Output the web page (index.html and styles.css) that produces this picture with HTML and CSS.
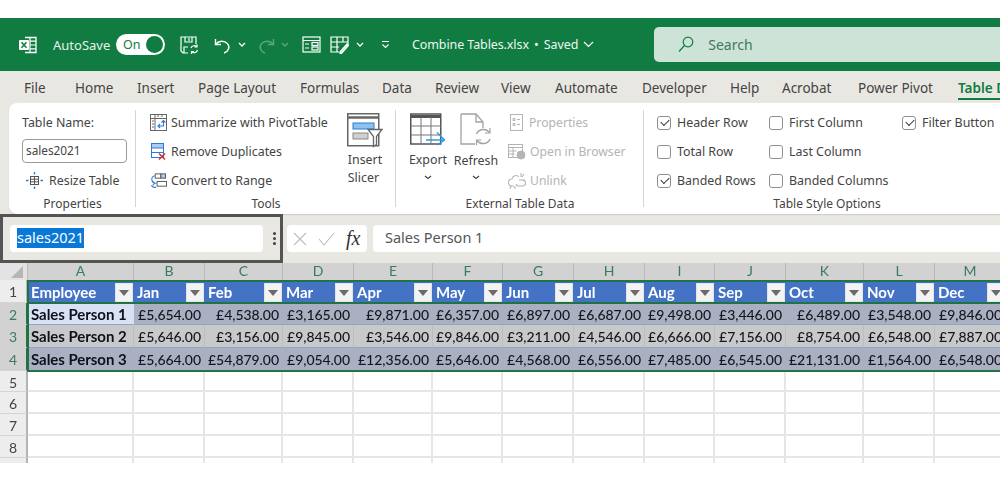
FILE: index.html
```html
<!DOCTYPE html>
<html lang="en">
<head>
<meta charset="utf-8">
<title>Combine Tables.xlsx</title>
<link rel="stylesheet" href="styles.css">
</head>
<body>
<div class="app">
  <header class="titlebar">
    <svg class="qi logo" width="20" height="20" viewBox="0 0 20 20"><path d="M7 2.500h11v15H7" fill="none" stroke="#fff" stroke-width="1.300"/><path d="M12 2.500v15M12 6.200h6M12 10h6M12 13.800h6" stroke="#fff" stroke-width="1.200"/><rect x="1" y="5" width="10" height="10" rx="1" fill="#fff"/><path d="M3.500 7.300l5 5.400M8.500 7.300l-5 5.400" stroke="#107c41" stroke-width="1.500"/></svg>
    <span class="autosave">AutoSave</span>
    <span class="toggle"><span class="toggle-label">On</span><span class="knob"></span></span>
    <svg class="qi save" width="20" height="20" viewBox="0 0 20 20" fill="none" stroke="#fff" stroke-width="1.200"><path d="M9 18H4l-2-2V2h15v7"/><path d="M6 2v5h7V2M10 3v3M5 18v-6h4"/><path d="M12 13a3.500 3.500 0 0 1 6-1M18.500 15a3.500 3.500 0 0 1-6 1.500M18 9.500V12h-2.500M12.500 19v-2.500H15"/></svg>
    <svg class="qi undo" width="18" height="18" viewBox="0 0 18 18" fill="none" stroke="#fff" stroke-width="1.400"><path d="M1.500 3v5.500H7"/><path d="M2 8a7 6 0 1 1 8 9"/></svg>
    <svg class="qi chev-u" width="8" height="6" viewBox="0 0 8 6" fill="none" stroke="#fff" stroke-width="1.300"><path d="M1 1l3 3 3-3"/></svg>
    <svg class="qi redo" width="18" height="18" viewBox="0 0 18 18" fill="none" stroke="#5fa57f" stroke-width="1.400"><path d="M16.500 3v5.500H11"/><path d="M16 8a7 6 0 1 0-8 9"/></svg>
    <svg class="qi chev-r" width="8" height="6" viewBox="0 0 8 6" fill="none" stroke="#5fa57f" stroke-width="1.300"><path d="M1 1l3 3 3-3"/></svg>
    <svg class="qi form" width="19" height="17" viewBox="0 0 19 17" fill="none" stroke="#fff" stroke-width="1.200"><rect x="1" y="1" width="17" height="15"/><path d="M1 4.500h17M3 8h4M3 12h4"/><rect x="10" y="6.500" width="6" height="3"/><rect x="10" y="11" width="6" height="3"/></svg>
    <svg class="qi tbl" width="19" height="18" viewBox="0 0 19 18" fill="none" stroke="#fff" stroke-width="1.200"><path d="M18 9V1H1v15h8M1 6h17M1 11h8M7 1v15M13 1v5"/><path d="M10 16l7-8 1.500 1.500-7 8H10z" fill="#cfe3d8"/></svg>
    <svg class="qi chev-t" width="8" height="6" viewBox="0 0 8 6" fill="none" stroke="#fff" stroke-width="1.300"><path d="M1 1l3 3 3-3"/></svg>
    <svg class="qi qat" width="9" height="9" viewBox="0 0 9 9" fill="none" stroke="#fff" stroke-width="1.100"><path d="M1 1.500h7M1.500 4.500l3 3 3-3"/></svg>
    <span class="doc">Combine Tables.xlsx <b class="dot">•</b> Saved</span>
    <svg class="qi chev-d" width="11" height="7" viewBox="0 0 11 7" fill="none" stroke="#fff" stroke-width="1.200"><path d="M1 1l4.500 4.500L10 1"/></svg>
    <div class="search">
      <svg width="16" height="17" viewBox="0 0 16 17" fill="none" stroke="#107c41" stroke-width="1.200"><circle cx="10" cy="6" r="4.800"/><path d="M6.500 9.500L1 15.500"/></svg>
      <span>Search</span>
    </div>
  </header>

  <div class="chrome">
  <nav class="tabs">
    <span class="tab">File</span><span class="tab">Home</span><span class="tab">Insert</span><span class="tab">Page Layout</span><span class="tab">Formulas</span><span class="tab">Data</span><span class="tab">Review</span><span class="tab">View</span><span class="tab">Automate</span><span class="tab">Developer</span><span class="tab">Help</span><span class="tab">Acrobat</span><span class="tab">Power Pivot</span><span class="tab active">Table Design</span>
  </nav>

  <section class="ribbon">
    <div class="group g-props">
      <div class="body col">
        <span class="line">Table Name:</span>
        <span class="namefield">sales2021</span>
        <span class="line item resize">
          <svg width="17" height="17" viewBox="0 0 17 17" fill="none" stroke="#555" stroke-width="1"><rect x="4.500" y="4.500" width="8" height="8"/><path d="M4.500 7.200h8M4.500 9.800h8M8.500 4.500v8"/><path d="M8.500 0v2.500M8.500 14.500V17M0 8.500h2.500M14.500 8.500H17" stroke="#2b7cd3" stroke-width="1.400"/></svg>
          Resize Table
        </span>
      </div>
      <div class="label">Properties</div>
    </div>
    <div class="group g-tools">
      <div class="body row">
        <div class="col t-list">
          <span class="line item"><svg width="17" height="17" viewBox="0 0 17 17" fill="none"><rect x=".500" y=".500" width="16" height="16" fill="#fff" stroke="#666"/><path d="M.5 4.500h16M5 .5v16" stroke="#666"/><path d="M2 7h2M2 10h2M2 13h2M7 2h2M11 2h2" stroke="#666"/><path d="M13.500 6.500v5.500H8M10 10l-2 2 2 2M11.500 8.500l2-2 2 2" stroke="#2b7cd3" stroke-width="1.100"/></svg>Summarize with PivotTable</span>
          <span class="line item"><svg width="17" height="17" viewBox="0 0 17 17" fill="none"><rect x="1.500" y=".500" width="12" height="14" fill="#fff" stroke="#2b7cd3"/><rect x="1.500" y=".500" width="12" height="4.500" fill="#a9cdf0" stroke="#2b7cd3"/><path d="M1.500 9.500h12" stroke="#2b7cd3"/><path d="M9 10.500l6 6M15 10.500l-6 6" stroke="#d13438" stroke-width="1.500"/></svg>Remove Duplicates</span>
          <span class="line item"><svg width="17" height="17" viewBox="0 0 18 17" fill="none"><rect x="5.500" y="1.500" width="6" height="4.500" fill="#fff" stroke="#555"/><rect x="11.500" y="1.500" width="5" height="4.500" fill="#a9cdf0" stroke="#555"/><rect x="7.500" y="9.500" width="10" height="5" fill="#fff" stroke="#555"/><path d="M5 3.500A4 4 0 0 0 2 8a4 4 0 0 0 3 3.500h2M3 9.500l2 2-2 2M1.500 13.500c1 2 3 2.500 5 2.500" stroke="#2b7cd3" stroke-width="1.100"/></svg>Convert to Range</span>
        </div>
        <div class="big slicer">
          <svg width="36" height="35" viewBox="0 0 36 35" fill="none"><rect x=".75" y=".75" width="31" height="32" fill="#fff" stroke="#666" stroke-width="1.500"/><path d="M.75 4.500h31" stroke="#666" stroke-width="2.500"/><rect x="6" y="10" width="21" height="6" fill="#8fc0ee" stroke="#2b7cd3"/><rect x="6" y="20" width="15" height="6" fill="#d0d0d0" stroke="#888"/><path d="M21 16.500h14l-5.500 7v8l-3 2v-10z" fill="#fff" stroke="#666" stroke-width="1.300"/></svg>
          <span>Insert<br>Slicer</span>
        </div>
      </div>
      <div class="label">Tools</div>
    </div>
    <div class="group g-ext">
      <div class="body row">
        <div class="big export">
          <svg width="36" height="33" viewBox="0 0 36 33" fill="none"><rect x=".75" y="1" width="30" height="30" fill="#fff" stroke="#555" stroke-width="1.500"/><path d="M.75 3.500h30" stroke="#555" stroke-width="3"/><path d="M11 4v27M21 4v27M1 13h30M1 22h30" stroke="#777"/><path d="M16 27h18M27 19.500l7.500 7.500-7.500 5" stroke="#2f9be6" stroke-width="1.500"/></svg>
          <span>Export</span>
          <svg class="mini" width="8" height="5" viewBox="0 0 8 5" fill="none" stroke="#444" stroke-width="1.200"><path d="M1 1l3 2.500L7 1"/></svg>
        </div>
        <div class="big refresh">
          <svg width="32" height="33" viewBox="0 0 32 33" fill="none"><path d="M1 1h15l7 8v6M1 1v30h14" fill="#fff" stroke="#a3a3a3" stroke-width="1.300"/><path d="M16 1v8h7" stroke="#a3a3a3" stroke-width="1.300"/><path d="M16.500 21a7.500 7.500 0 0 1 13-1.500M30 26a7.500 7.500 0 0 1-13 1.500" stroke="#a3a3a3" stroke-width="1.500"/><path d="M30 15v5h-5M16.500 32v-5h5" stroke="#a3a3a3" stroke-width="1.200"/></svg>
          <span>Refresh</span>
          <svg class="mini" width="8" height="5" viewBox="0 0 8 5" fill="none" stroke="#444" stroke-width="1.200"><path d="M1 1l3 2.500L7 1"/></svg>
        </div>
        <div class="col disabled">
          <span class="line item"><svg width="17" height="17" viewBox="0 0 17 17" fill="none" stroke="#b4b4b4"><rect x="2.500" y=".500" width="12" height="16"/><path d="M5 4.500h2v2H5zM5 9.500h2v2H5zM9 5.500h3M9 10.500h3"/></svg>Properties</span>
          <span class="line item"><svg width="18" height="17" viewBox="0 0 18 17" fill="none" stroke="#b4b4b4"><rect x=".500" y="1.500" width="14" height="13"/><path d="M.5 4.500h14M5 4.500v10M.5 8h8M.5 11h6"/><circle cx="13" cy="12" r="4" fill="#b4b4b4"/></svg>Open in Browser</span>
          <span class="line item"><svg width="18" height="17" viewBox="0 0 18 17" fill="none" stroke="#b4b4b4" stroke-width="1.100"><path d="M6 14H4a3 3 0 0 1 0-7 4 4 0 0 1 7-2M11 8h3a3 3 0 0 1 1 6h-5a3 3 0 0 1-2-2M13 1v4M16 2l-2 3M3 14l-1 3M7 14v3"/></svg>Unlink</span>
        </div>
      </div>
      <div class="label">External Table Data</div>
    </div>
    <div class="group g-opts">
      <div class="body row">
        <div class="col c-one">
          <span class="line item"><span class="box on"></span>Header Row</span>
          <span class="line item"><span class="box"></span>Total Row</span>
          <span class="line item"><span class="box on"></span>Banded Rows</span>
        </div>
        <div class="col c-two">
          <span class="line item"><span class="box"></span>First Column</span>
          <span class="line item"><span class="box"></span>Last Column</span>
          <span class="line item"><span class="box"></span>Banded Columns</span>
        </div>
        <div class="col c-three">
          <span class="line item"><span class="box on"></span>Filter Button</span>
        </div>
      </div>
      <div class="label">Table Style Options</div>
    </div>
  </section>

  <section class="formula">
    <div class="namebox">
      <div class="nameinput"><span class="selected">sales2021</span></div>
      <span class="dots"></span>
    </div>
    <div class="fxbox">
      <svg width="14" height="14" viewBox="0 0 14 14" fill="none" stroke="#bdbdbd" stroke-width="1.100"><path d="M1 1l12 12M13 1L1 13"/></svg>
      <svg width="17" height="14" viewBox="0 0 17 14" fill="none" stroke="#bdbdbd" stroke-width="1.100"><path d="M1 7l5 6L16 1"/></svg>
      <span class="fx">fx</span>
    </div>
    <div class="finput">Sales Person 1</div>
  </section>
  </div>

  <section class="sheetwrap">
    <div class="sheet">
      <div class="corner"><span class="tri"></span></div>
      <div class="ch">A</div><div class="ch">B</div><div class="ch">C</div><div class="ch">D</div><div class="ch">E</div><div class="ch">F</div><div class="ch">G</div><div class="ch">H</div><div class="ch">I</div><div class="ch">J</div><div class="ch">K</div><div class="ch">L</div><div class="ch">M</div>

      <div class="rh">1</div>
      <div class="th">Employee<span class="fb"></span></div><div class="th">Jan<span class="fb"></span></div><div class="th">Feb<span class="fb"></span></div><div class="th">Mar<span class="fb"></span></div><div class="th">Apr<span class="fb"></span></div><div class="th">May<span class="fb"></span></div><div class="th">Jun<span class="fb"></span></div><div class="th">Jul<span class="fb"></span></div><div class="th">Aug<span class="fb"></span></div><div class="th">Sep<span class="fb"></span></div><div class="th">Oct<span class="fb"></span></div><div class="th">Nov<span class="fb"></span></div><div class="th">Dec<span class="fb"></span></div>

      <div class="rh sel">2</div>
      <div class="td name cur">Sales Person 1</div><div class="td d">£5,654.00</div><div class="td d">£4,538.00</div><div class="td d">£3,165.00</div><div class="td d">£9,871.00</div><div class="td d">£6,357.00</div><div class="td d">£6,897.00</div><div class="td d">£6,687.00</div><div class="td d">£9,498.00</div><div class="td d">£3,446.00</div><div class="td d">£6,489.00</div><div class="td d">£3,548.00</div><div class="td d">£9,846.00</div>

      <div class="rh sel">3</div>
      <div class="td name l">Sales Person 2</div><div class="td l">£5,646.00</div><div class="td l">£3,156.00</div><div class="td l">£9,845.00</div><div class="td l">£3,546.00</div><div class="td l">£9,846.00</div><div class="td l">£3,211.00</div><div class="td l">£4,546.00</div><div class="td l">£6,666.00</div><div class="td l">£7,156.00</div><div class="td l">£8,754.00</div><div class="td l">£6,548.00</div><div class="td l">£7,887.00</div>

      <div class="rh sel">4</div>
      <div class="td name d">Sales Person 3</div><div class="td d">£5,664.00</div><div class="td d">£54,879.00</div><div class="td d">£9,054.00</div><div class="td d">£12,356.00</div><div class="td d">£5,646.00</div><div class="td d">£4,568.00</div><div class="td d">£6,556.00</div><div class="td d">£7,485.00</div><div class="td d">£6,545.00</div><div class="td d">£21,131.00</div><div class="td d">£1,564.00</div><div class="td d">£6,548.00</div>

      <div class="rh">5</div><div class="e"></div><div class="e"></div><div class="e"></div><div class="e"></div><div class="e"></div><div class="e"></div><div class="e"></div><div class="e"></div><div class="e"></div><div class="e"></div><div class="e"></div><div class="e"></div><div class="e"></div>
      <div class="rh">6</div><div class="e"></div><div class="e"></div><div class="e"></div><div class="e"></div><div class="e"></div><div class="e"></div><div class="e"></div><div class="e"></div><div class="e"></div><div class="e"></div><div class="e"></div><div class="e"></div><div class="e"></div>
      <div class="rh">7</div><div class="e"></div><div class="e"></div><div class="e"></div><div class="e"></div><div class="e"></div><div class="e"></div><div class="e"></div><div class="e"></div><div class="e"></div><div class="e"></div><div class="e"></div><div class="e"></div><div class="e"></div>
      <div class="rh">8</div><div class="e"></div><div class="e"></div><div class="e"></div><div class="e"></div><div class="e"></div><div class="e"></div><div class="e"></div><div class="e"></div><div class="e"></div><div class="e"></div><div class="e"></div><div class="e"></div><div class="e"></div>
      <div class="rh cut"></div><div class="e cut"></div><div class="e cut"></div><div class="e cut"></div><div class="e cut"></div><div class="e cut"></div><div class="e cut"></div><div class="e cut"></div><div class="e cut"></div><div class="e cut"></div><div class="e cut"></div><div class="e cut"></div><div class="e cut"></div><div class="e cut"></div>
    </div>
    <div class="sel-table"></div>
    <div class="sel-body"></div>
  </section>
</div>
</body>
</html>
```
FILE: styles.css
```css
* { box-sizing: border-box; }
html, body { margin: 0; padding: 0; background: #fff; overflow: hidden; }
body { width: 1000px; height: 500px; font-family: "Noto Sans", "Open Sans", sans-serif; font-size: 13px; color: #444; }
.app { width: 1000px; height: 500px; padding-top: 18px; overflow: hidden; filter: blur(.3px); }

/* title bar */
.titlebar { height: 53px; background: #107c41; display: flex; align-items: center; color: #fff; }
.qi { flex: none; }
.logo { margin-left: 18px; }
.autosave { margin-left: 15px; width: 63px; font-size: 13px; color: #e6f2ec; }
.toggle { width: 49px; height: 21px; border-radius: 11px; background: #fff; display: flex; align-items: center; justify-content: space-between; padding: 0 2px 0 7px; color: #107c41; font-size: 12.5px; }
.knob { width: 17px; height: 17px; border-radius: 50%; background: #107c41; }
.save { margin-left: 14px; }
.undo { margin-left: 15px; }
.chev-u { margin-left: 6px; }
.redo { margin-left: 11px; }
.chev-r { margin-left: 6px; }
.form { margin-left: 13px; }
.tbl { margin-left: 9px; }
.chev-t { margin-left: 7px; }
.qat { margin-left: 17px; }
.doc { margin-left: 22px; font-size: 12.5px; color: #eef6f1; white-space: nowrap; letter-spacing: -.1px; }
.dot { font-weight: 400; margin: 0 2px; }
.chev-d { margin-left: 5px; }
.search { margin-left: 60px; flex: 1; height: 35px; background: #cde3d8; border-radius: 5px 0 0 5px; display: flex; align-items: center; padding-left: 24px; gap: 14px; color: #3c7a5b; font-size: 14px; }

/* tabs */
.chrome { background: #e9e7e2; }
.tabs { height: 32px; display: grid; grid-template-columns: 51px 62px 61px 102px 82px 53px 66px 54px 87px 88px 52px 76px 100px 1fr; padding-left: 24px; font-size: 13.5px; color: #444; white-space: nowrap; overflow: hidden; }
.tab { line-height: 34px; min-width: 0; }
.tab.active { color: #107c41; font-weight: 600; height: 29px; box-shadow: inset 0 -2px 0 #107c41; }

/* ribbon */
.ribbon { height: 111px; margin-left: 9px; background: #fff; display: flex; font-size: 12.4px; border-radius: 8px 0 0 8px; color: #444; padding: 5px 0 4px; white-space: nowrap; box-shadow: 0 1px 1px rgba(0,0,0,.12); }
.group { display: flex; flex-direction: column; flex: none; height: 100px; background: linear-gradient(#d5d5d5, #d5d5d5) right 2px / 1px 97px no-repeat; }
.body { flex: 1; }
.row { display: flex; }
.col { display: flex; flex-direction: column; }
.label { height: 19px; line-height: 19px; margin-top: -1px; text-align: center; font-size: 12px; flex: none; }
.line { height: 29px; line-height: 29px; flex: none; }
.item { display: flex; align-items: center; gap: 4px; }
.g-props { width: 127px; padding-left: 13px; padding-right: 8px; }
.g-props .label { margin-left: -13px; margin-right: -8px; }
.namefield { height: 24px; width: 105px; margin: 2px 0 3px; border: 1px solid #9a9a9a; border-radius: 4px; line-height: 20px; padding-left: 3px; font-size: 11.8px; flex: none; }
.resize { padding-left: 4px; gap: 6px; }
.g-tools { width: 260px; padding-left: 14px; }
.g-tools .label { margin-left: -14px; }
.t-list { width: 197px; flex: none; }
.big { display: flex; flex-direction: column; align-items: center; line-height: 18px; padding-top: 5px; flex: none; }
.big > span { margin-top: 5px; }
.slicer { width: 36px; }
.slicer > span { margin-top: 3px; }
.g-ext { width: 248px; padding-left: 13px; }
.g-ext .label { margin-left: -13px; }
.export { width: 38px; }
.refresh { width: 44px; margin-left: 7px; }
.refresh > span { margin-top: 6px; }
.mini { margin-top: 6px; }
.refresh .mini { margin-top: 5px; }
.disabled { color: #b4b4b4; margin-left: 10px; font-size: 12.2px; }
.g-opts { width: 356px; background: none; padding-left: 13px; }
.g-opts .label { margin-left: -13px; width: 366px; }
.box { width: 14px; height: 14px; border: 1px solid #8f8f8f; border-radius: 3px; flex: none; position: relative; background: #fff; }
.g-opts .item { gap: 6px; }
.box.on::after { content: ""; position: absolute; left: 3px; top: 2px; width: 7px; height: 4px; border-left: 1.2px solid #333; border-bottom: 1.2px solid #333; transform: rotate(-45deg); }
.c-one { width: 112px; }
.c-two { width: 133px; }

/* formula bar */
.formula { height: 49px; display: flex; align-items: center; }
.namebox { width: 283px; height: 49px; border: 3px solid #545454; padding: 0 0 0 7px; display: flex; align-items: center; flex: none; }
.nameinput { width: 253px; height: 27px; background: #fff; border-radius: 4px; display: flex; align-items: center; padding: 0 0 1px 7px; font-size: 14.5px; }
.selected { background: #0a78d7; color: #fff; height: 20px; line-height: 19px; }
.dots { width: 3px; height: 3px; margin-left: 10px; background: #444; box-shadow: 0 -5px 0 #444, 0 5px 0 #444; border-radius: 50%; }
.fxbox { width: 80px; height: 27px; margin-left: 4px; background: #fff; border-radius: 4px; display: flex; align-items: center; gap: 11px; padding-left: 6px; flex: none; }
.fx { font-family: "Liberation Serif", serif; font-style: italic; font-size: 20px; color: #333; }
.finput { flex: 1; margin-left: 6px; height: 27px; background: #fff; border-radius: 4px 0 0 4px; line-height: 25px; padding-left: 12px; font-size: 14.5px; color: #555; }

/* sheet */
.sheetwrap { position: relative; height: 201px; width: 1000px; overflow: hidden; }
.sheet { display: grid; width: 1006px; grid-template-columns: 28px 106px 71px 78px 71px 79px 70px 71px 71px 70px 71px 78px 71px 71px; grid-template-rows: 17px 23px 22px 23px 23px 21px 22px 22px 22px 5px; font-family: Lato, "Liberation Sans", sans-serif; font-size: 15px; }
.corner { background: #e3e3e3; border-right: 1px solid #bcbcbc; display: flex; justify-content: flex-end; align-items: flex-end; padding: 0 4px 2px 0; }
.tri { width: 0; height: 0; border-left: 12px solid transparent; border-bottom: 12px solid #b6b6b6; }
.ch { background: #d2d2d2; color: #3b7a5c; text-align: center; line-height: 15px; font-size: 14px; border-right: 1px solid #b9b9b9; }
.rh { background: #ededed; color: #444; text-align: center; font-size: 14px; padding-top: 2px; line-height: 19px; border-right: 2px solid #b4b4b4; border-bottom: 1px solid #d4d4d4; }
.rh.sel { background: #d2d2d2; color: #3b7a5c; border-right-color: #217346; }
.rh.cut { border-bottom: 0; padding-top: 0; }
.th { background: #4472c4; color: #fff; font-weight: 700; padding: 1px 1px 0 3px; line-height: 20px; display: flex; justify-content: space-between; align-items: center; min-width: 0; }
.fb { width: 18px; height: 19px; background: #f3f3f3; border: 1px solid #e4e4e4; position: relative; flex: none; }
.fb::after { content: ""; position: absolute; left: 3px; top: 6px; border-left: 5px solid transparent; border-right: 5px solid transparent; border-top: 6px solid #6a6a6a; }
.td { text-align: right; padding: 2px 3px 0 0; line-height: 19px; font-size: 14px; letter-spacing: -.05px; color: #15151f; font-weight: 500; border-bottom: 1px solid #8ea6cc; white-space: nowrap; border-right: 1px solid transparent; min-width: 0; }
.d { background: #aab0c1; }
.l { background: #c9c9c9; border-right-color: #bdbdbd; }
.name { text-align: left; padding-left: 3px; font-size: 15px; font-weight: 700; color: #10101c; }
.cur { background: #d9e2f5; }
.e { border-right: 2px solid #e6e6e6; border-bottom: 2px solid #e6e6e6; }
.e.cut { border-bottom: 0; }
.sel-table { position: absolute; left: 27px; top: 17px; width: 990px; height: 92px; border: 2px solid #217346; }
.sel-body { position: absolute; left: 27px; top: 39px; width: 990px; height: 2px; background: #217346; }
```
